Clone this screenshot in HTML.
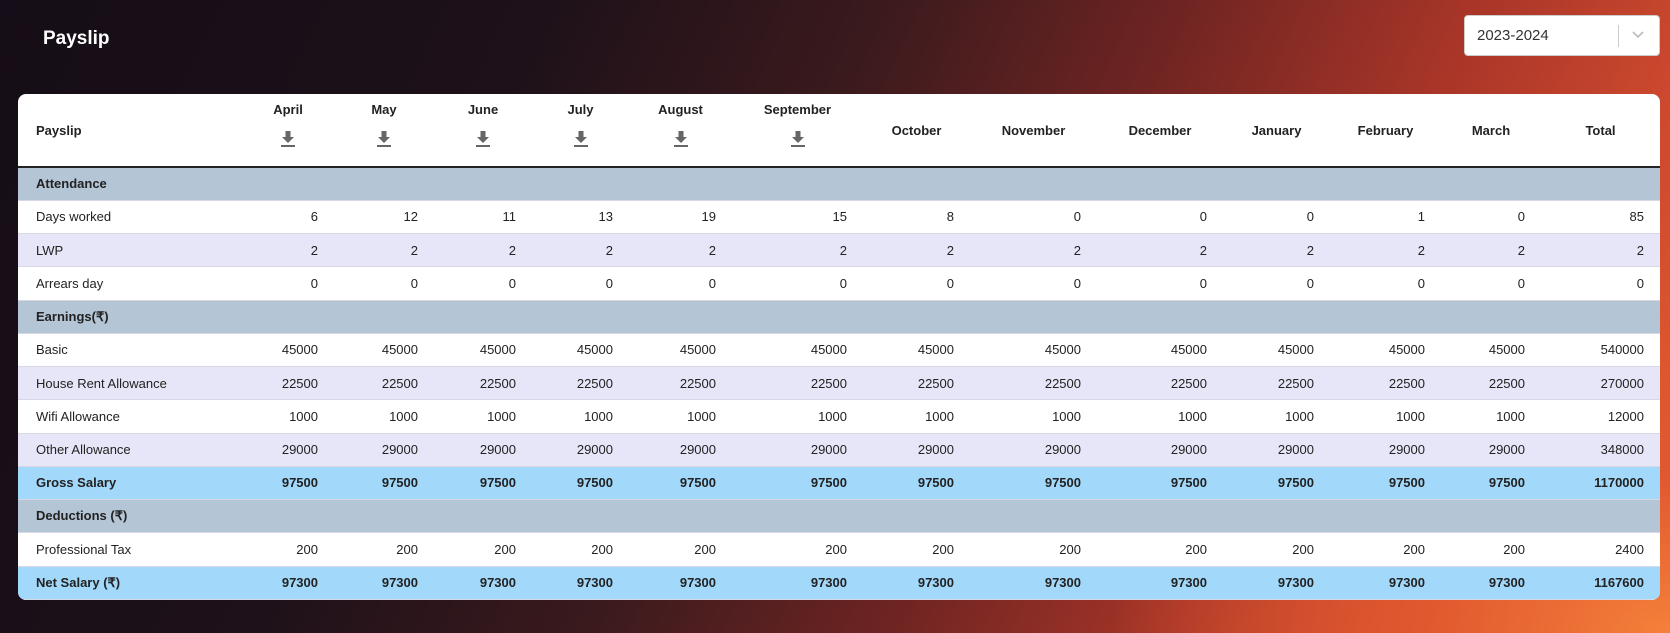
<!DOCTYPE html>
<html><head><meta charset="utf-8"><style>
*{margin:0;padding:0;box-sizing:border-box}
html,body{width:1670px;height:633px;overflow:hidden}
body{font-family:"Liberation Sans",sans-serif;background:
radial-gradient(ellipse 700px 450px at 1670px 633px,#f5803a 0%,#e0582f 35%,rgba(200,70,45,0) 80%),
linear-gradient(115deg,#150d17 0%,#1e1119 28%,#3a1a1d 45%,#6e2422 60%,#a83528 75%,#cf4a2e 88%,#e4612f 100%);position:relative}
.title{position:absolute;left:43px;top:28px;color:#fff;font-weight:bold;font-size:19px}
.sel{position:absolute;left:1464px;top:15px;width:196px;height:41px;background:#fff;border-radius:4px;border:1px solid #ccc}
.sel span{position:absolute;left:12px;top:11px;font-size:15px;color:#333}
.sel i{position:absolute;left:153px;top:9px;width:1px;height:22px;background:#ccc}
.sel svg{position:absolute;left:166px;top:14px}
.card{position:absolute;left:18px;top:94px;width:1642px;height:506px;background:#fff;border-radius:8px;overflow:hidden}
table{border-collapse:collapse;table-layout:fixed;width:1642px;font-size:13px;color:#222}
th{height:73px;font-weight:bold;text-align:center;vertical-align:middle;border-bottom:2px solid #222;font-size:13px}
th.l{text-align:left;padding-left:18px}
th .m{display:block;margin-top:-12px}
th svg{display:block;margin:14px auto 0}
td{height:33.25px;text-align:right;padding-right:16px;border-bottom:1px solid #d8d8e4}
td:first-child{text-align:left;padding-left:18px}
tr.s td{background:#b4c5d5;font-weight:bold}
tr.a td{background:#e6e6f8}
tr.g td{background:#a2d8fa;font-weight:bold}
</style></head><body>
<div class="title">Payslip</div>
<div class="sel"><span>2023-2024</span><i></i><svg width="14" height="10" viewBox="0 0 14 10"><path d="M2 2l5 5 5-5" stroke="#bbb" stroke-width="1.6" fill="none"/></svg></div>
<div class="card"><table>
<colgroup><col style="width:224px"><col style="width:92px"><col style="width:100px"><col style="width:98px"><col style="width:97px"><col style="width:103px"><col style="width:131px"><col style="width:107px"><col style="width:127px"><col style="width:126px"><col style="width:107px"><col style="width:111px"><col style="width:100px"><col style="width:119px"></colgroup>
<tr><th class="l">Payslip</th>
<th><span class="m">April</span><svg width="14" height="16" viewBox="0 0 14 16"><path d="M4.5 0h5v6h3.5L7 12 1 6h3.5z" fill="#666"/><rect x="0" y="14" width="14" height="2" fill="#666"/></svg></th>
<th><span class="m">May</span><svg width="14" height="16" viewBox="0 0 14 16"><path d="M4.5 0h5v6h3.5L7 12 1 6h3.5z" fill="#666"/><rect x="0" y="14" width="14" height="2" fill="#666"/></svg></th>
<th><span class="m">June</span><svg width="14" height="16" viewBox="0 0 14 16"><path d="M4.5 0h5v6h3.5L7 12 1 6h3.5z" fill="#666"/><rect x="0" y="14" width="14" height="2" fill="#666"/></svg></th>
<th><span class="m">July</span><svg width="14" height="16" viewBox="0 0 14 16"><path d="M4.5 0h5v6h3.5L7 12 1 6h3.5z" fill="#666"/><rect x="0" y="14" width="14" height="2" fill="#666"/></svg></th>
<th><span class="m">August</span><svg width="14" height="16" viewBox="0 0 14 16"><path d="M4.5 0h5v6h3.5L7 12 1 6h3.5z" fill="#666"/><rect x="0" y="14" width="14" height="2" fill="#666"/></svg></th>
<th><span class="m">September</span><svg width="14" height="16" viewBox="0 0 14 16"><path d="M4.5 0h5v6h3.5L7 12 1 6h3.5z" fill="#666"/><rect x="0" y="14" width="14" height="2" fill="#666"/></svg></th>
<th>October</th><th>November</th><th>December</th><th>January</th><th>February</th><th>March</th><th>Total</th></tr>
<tr class="s"><td colspan="14">Attendance</td></tr>
<tr><td>Days worked</td><td>6</td><td>12</td><td>11</td><td>13</td><td>19</td><td>15</td><td>8</td><td>0</td><td>0</td><td>0</td><td>1</td><td>0</td><td>85</td></tr>
<tr class="a"><td>LWP</td><td>2</td><td>2</td><td>2</td><td>2</td><td>2</td><td>2</td><td>2</td><td>2</td><td>2</td><td>2</td><td>2</td><td>2</td><td>2</td></tr>
<tr><td>Arrears day</td><td>0</td><td>0</td><td>0</td><td>0</td><td>0</td><td>0</td><td>0</td><td>0</td><td>0</td><td>0</td><td>0</td><td>0</td><td>0</td></tr>
<tr class="s"><td colspan="14">Earnings(₹)</td></tr>
<tr><td>Basic</td><td>45000</td><td>45000</td><td>45000</td><td>45000</td><td>45000</td><td>45000</td><td>45000</td><td>45000</td><td>45000</td><td>45000</td><td>45000</td><td>45000</td><td>540000</td></tr>
<tr class="a"><td>House Rent Allowance</td><td>22500</td><td>22500</td><td>22500</td><td>22500</td><td>22500</td><td>22500</td><td>22500</td><td>22500</td><td>22500</td><td>22500</td><td>22500</td><td>22500</td><td>270000</td></tr>
<tr><td>Wifi Allowance</td><td>1000</td><td>1000</td><td>1000</td><td>1000</td><td>1000</td><td>1000</td><td>1000</td><td>1000</td><td>1000</td><td>1000</td><td>1000</td><td>1000</td><td>12000</td></tr>
<tr class="a"><td>Other Allowance</td><td>29000</td><td>29000</td><td>29000</td><td>29000</td><td>29000</td><td>29000</td><td>29000</td><td>29000</td><td>29000</td><td>29000</td><td>29000</td><td>29000</td><td>348000</td></tr>
<tr class="g"><td>Gross Salary</td><td>97500</td><td>97500</td><td>97500</td><td>97500</td><td>97500</td><td>97500</td><td>97500</td><td>97500</td><td>97500</td><td>97500</td><td>97500</td><td>97500</td><td>1170000</td></tr>
<tr class="s"><td colspan="14">Deductions (₹)</td></tr>
<tr><td>Professional Tax</td><td>200</td><td>200</td><td>200</td><td>200</td><td>200</td><td>200</td><td>200</td><td>200</td><td>200</td><td>200</td><td>200</td><td>200</td><td>2400</td></tr>
<tr class="g"><td>Net Salary (₹)</td><td>97300</td><td>97300</td><td>97300</td><td>97300</td><td>97300</td><td>97300</td><td>97300</td><td>97300</td><td>97300</td><td>97300</td><td>97300</td><td>97300</td><td>1167600</td></tr>
</table></div>
</body></html>
